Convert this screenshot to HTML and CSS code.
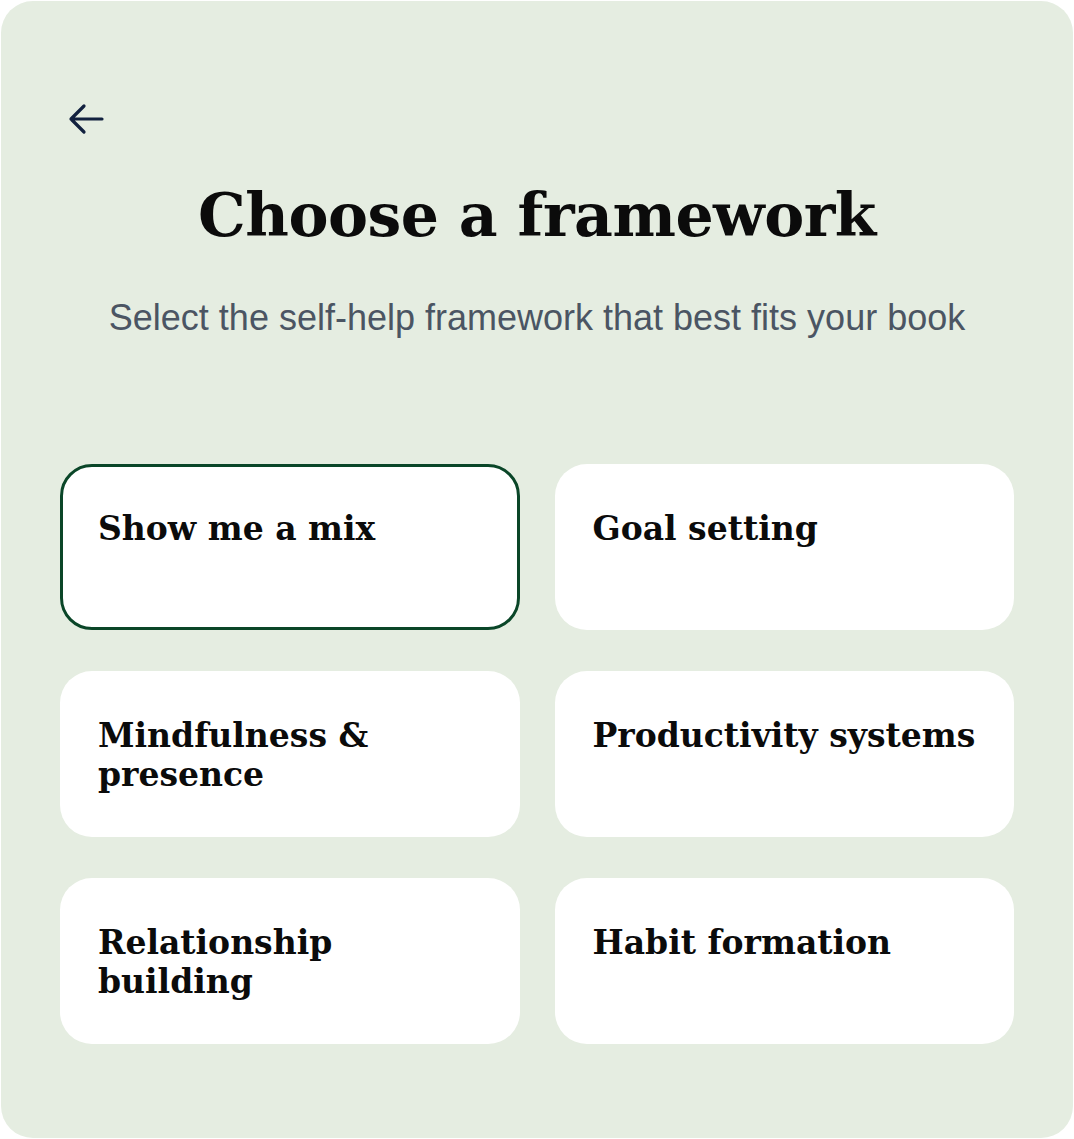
FILE: index.html
```html
<!DOCTYPE html>
<html>
<head>
<meta charset="utf-8">
<link rel="stylesheet" href="styles.css">
</head>
<body>
<div class="panel">
  <button class="back" aria-label="Back">
    <svg width="40" height="40" viewBox="0 0 40 40" fill="none" stroke="#12213f" stroke-width="3.2" stroke-linecap="round" stroke-linejoin="round">
      <path d="M35 20H4M17 7L4 20l13 13"/>
    </svg>
  </button>
  <h1 class="title">Choose a framework</h1>
  <p class="subtitle">Select the self-help framework that best fits your book</p>
  <div class="grid">
    <div class="card selected">Show me a mix</div>
    <div class="card">Goal setting</div>
    <div class="card">Mindfulness &amp; presence</div>
    <div class="card">Productivity systems</div>
    <div class="card">Relationship building</div>
    <div class="card">Habit formation</div>
  </div>
</div>
</body>
</html>
```

FILE: styles.css
```css
html, body {
  margin: 0;
  padding: 0;
  background: #ffffff;
}
.panel {
  margin: 1px;
  height: 1137px;
  box-sizing: border-box;
  background: #e5ede1;
  border-radius: 32px;
  padding: 98px 59px 0 59px;
}
.back {
  display: block;
  background: none;
  border: 0;
  padding: 0;
  margin: 0 0 0 7px;
  width: 40px;
  height: 40px;
  cursor: pointer;
}
.back svg {
  display: block;
}
.title {
  margin: 36px 0 0;
  text-align: center;
  font-family: "DejaVu Serif", Georgia, serif;
  font-weight: bold;
  font-size: 60px;
  line-height: 80px;
  color: #0b0b0b;
  letter-spacing: -0.5px;
}
.subtitle {
  margin: 41px 0 0;
  text-align: center;
  font-family: "Liberation Sans", Arial, sans-serif;
  font-size: 36px;
  line-height: 44px;
  color: #4b5563;
}
.grid {
  margin-top: 124px;
  display: grid;
  grid-template-columns: 1fr 1fr;
  column-gap: 35px;
  row-gap: 41px;
}
.card {
  background: #ffffff;
  border-radius: 32px;
  height: 166px;
  box-sizing: border-box;
  padding: 45px 38px 0;
  font-family: "DejaVu Serif", Georgia, serif;
  font-weight: bold;
  font-size: 33px;
  line-height: 39px;
  color: #0b0b0b;
}
.card.selected {
  border: 3px solid #0a4628;
  padding: 42px 35px 0;
}
```
